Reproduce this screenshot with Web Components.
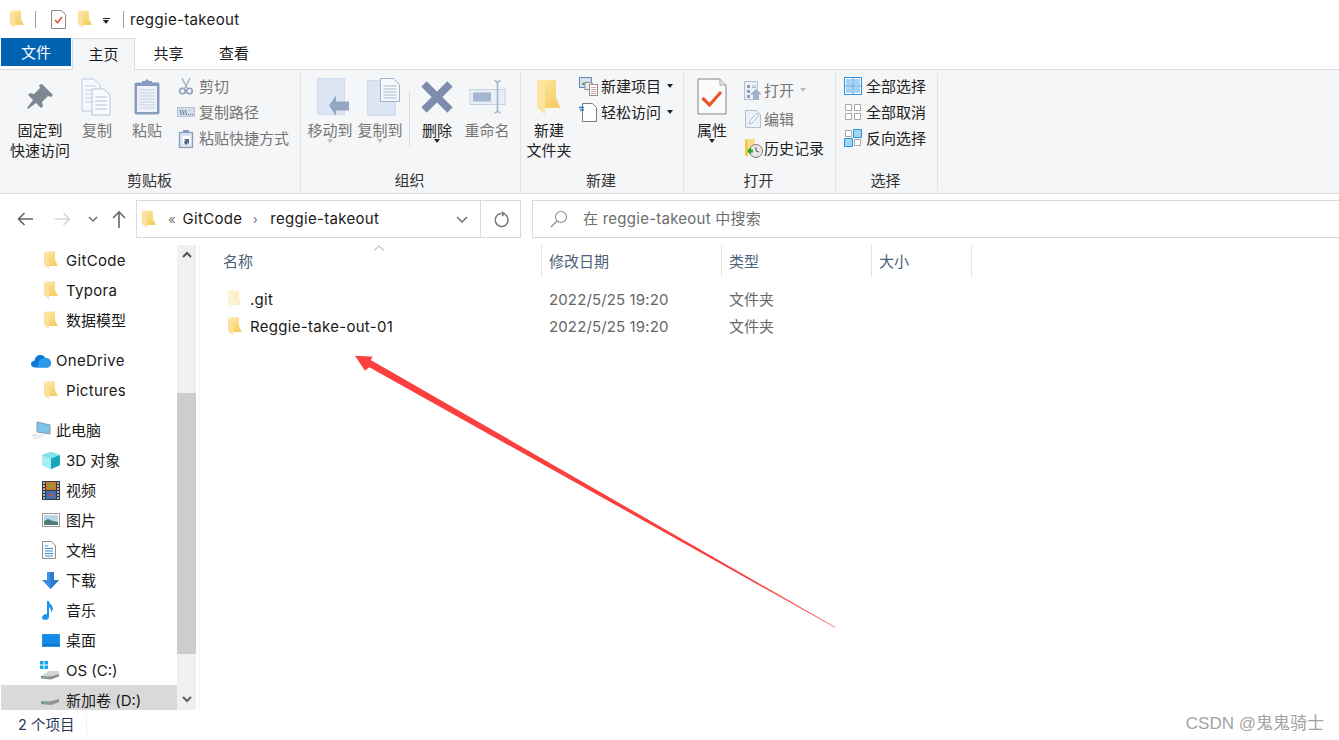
<!DOCTYPE html>
<html lang="zh-CN"><head><meta charset="utf-8"><title>reggie-takeout</title>
<style>
html,body{margin:0;padding:0;background:#fff;overflow:hidden}
body{width:1339px;height:740px;font:15px/20px Inter,"Noto Sans CJK SC",sans-serif;color:#1a1a1a}
</style></head><body>
<x-window>
  <x-titlebar title-text="reggie-takeout"></x-titlebar>
  <x-tabs></x-tabs>
  <x-ribbon>
    <x-group label="剪贴板" w="300" pad="7">
      <x-big icon="pin" w="64" text="固定到|快速访问"></x-big>
      <x-big icon="copy" w="50" text="复制" dim></x-big>
      <x-big icon="paste" w="50" text="粘贴" dim></x-big>
      <x-col gap="6" ml="5">
        <x-small icon="cut" text="剪切" dim></x-small>
        <x-small icon="cpath" text="复制路径" dim></x-small>
        <x-small icon="short" text="粘贴快捷方式" dim></x-small>
      </x-col>
    </x-group>
    <x-group label="组织" w="220" pad="4">
      <x-big icon="moveto" w="50" text="移动到" dim arrow></x-big>
      <x-big icon="copyto" w="50" text="复制到" dim arrow></x-big>
      <x-vsep></x-vsep>
      <x-big icon="del" w="46" text="删除" arrow strong></x-big>
      <x-big icon="rename" w="54" text="重命名" dim></x-big>
    </x-group>
    <x-group label="新建" w="163" pad="4">
      <x-big icon="bigfolder" w="48" text="新建|文件夹"></x-big>
      <x-col gap="6" ml="6">
        <x-small icon="newitem" text="新建项目" caret></x-small>
        <x-small icon="easy" text="轻松访问" caret></x-small>
      </x-col>
    </x-group>
    <x-group label="打开" w="152" pad="4">
      <x-big icon="prop" w="48" text="属性" arrow strong></x-big>
      <x-col gap="9" ml="8" mt="4">
        <x-small icon="open" text="打开" dim caret="dim" tg="2"></x-small>
        <x-small icon="edit" text="编辑" dim tg="2"></x-small>
        <x-small icon="hist" text="历史记录" tg="2"></x-small>
      </x-col>
    </x-group>
    <x-group label="选择" w="102" pad="8">
      <x-col gap="6">
        <x-small icon="selall" text="全部选择"></x-small>
        <x-small icon="selnone" text="全部取消"></x-small>
        <x-small icon="selinv" text="反向选择"></x-small>
      </x-col>
    </x-group>
  </x-ribbon>
  <x-addressbar></x-addressbar>
  <x-main>
    <x-nav slot="nav">
      <x-navitem icon="folder" ind="44" text="GitCode"></x-navitem>
      <x-navitem icon="folder" ind="44" text="Typora"></x-navitem>
      <x-navitem icon="folder" ind="44" text="数据模型"></x-navitem>
      <x-navitem icon="cloud" ind="31" text="OneDrive" gapt="10"></x-navitem>
      <x-navitem icon="folder" ind="44" text="Pictures"></x-navitem>
      <x-navitem icon="pc" ind="31" text="此电脑" gapt="10"></x-navitem>
      <x-navitem icon="cube" ind="42" text="3D 对象"></x-navitem>
      <x-navitem icon="film" ind="42" text="视频"></x-navitem>
      <x-navitem icon="image" ind="42" text="图片"></x-navitem>
      <x-navitem icon="doc" ind="42" text="文档"></x-navitem>
      <x-navitem icon="down" ind="42" text="下载"></x-navitem>
      <x-navitem icon="note" ind="42" text="音乐"></x-navitem>
      <x-navitem icon="desk" ind="42" text="桌面"></x-navitem>
      <x-navitem icon="osdrive" ind="40" text="OS (C:)"></x-navitem>
      <x-navitem icon="drive" ind="40" text="新加卷 (D:)" selected></x-navitem>
    </x-nav>
    <x-files slot="files">
      <x-filerow name=".git" date="2022/5/25 19:20" kind="文件夹" pale></x-filerow>
      <x-filerow name="Reggie-take-out-01" date="2022/5/25 19:20" kind="文件夹"></x-filerow>
    </x-files>
  </x-main>
  <x-status text="2 个项目"></x-status>
  <x-arrow></x-arrow>
  <x-mark text="CSDN @鬼鬼骑士"></x-mark>
</x-window>
<script>
const fold=(id)=>`<defs><linearGradient id="${id}" x1="0" y1="0" x2="0.6" y2="1"><stop offset="0" stop-color="#fde8a6"/><stop offset="1" stop-color="#f6cf66"/></linearGradient></defs>`;
const ICONS={
 folder:[14,18,fold('f1')+`<path d="M0 .5h11V9l3 6H5V3.500z" fill="url(#f1)"/><path d="M0 1l5 2.500V18l-5-4z" fill="#fbe19a"/>`],
 palefolder:[14,18,`<path d="M0 .5h11V9l3 6H5V3.500z" fill="#fdf0c8"/><path d="M0 1l5 2.500V18l-5-4z" fill="#fdf3d6"/>`],
 bigfolder:[24,35,fold('f3')+`<path d="M0 0h19v18l4.500 10H8V5z" fill="url(#f3)"/><path d="M0 .5l8 4.500v30l-8-7.500z" fill="#fce5a2"/>`],
 tdoc:[15,19,`<path d="M.5.500h10l4 4v14H.5z" fill="#fdfdfd" stroke="#8a8a8a"/><path d="M4 10l2.500 2.500L11 7" fill="none" stroke="#e8562a" stroke-width="1.600"/>`],
 pin:[28,28,`<path d="M16 1l11 11-2 2-3-1-6 6 1 4-2 2-5-5-8 6-1-1 6-8-5-5 2-2 4 1 6-6-1-3z" fill="#7e8893"/>`],
 copy:[32,38,`<path d="M1 1h12l6 6v26H1z" fill="#f5f8fc" stroke="#bcc9dc"/><path d="M4 8h11M4 12h11M4 16h11M4 20h11M4 24h11" stroke="#c3cfe0"/><path d="M11 11h12l6 6v20H11z" fill="#f8fafd" stroke="#b3c2d8"/><path d="M14 19h12M14 23h12M14 27h12M14 31h12" stroke="#b8c6da"/>`],
 paste:[28,38,`<rect x="1.500" y="4.500" width="25" height="32" rx="2" fill="#8a9cbd"/><rect x="4" y="8" width="20" height="26" fill="#eef2f8"/><path d="M6 12h16M6 15h16M6 18h16M6 21h16M6 24h16M6 27h16M6 30h16" stroke="#c6d1e3"/><path d="M9 6V3h3l2-2 2 2h3v3z" fill="#8a9cbd"/>`],
 cut:[14,18,`<path d="M3 1l5 10M11 1L6 11" stroke="#a6b4c8" stroke-width="1.500" fill="none"/><circle cx="3.500" cy="14" r="2.800" fill="none" stroke="#8ea0bc" stroke-width="1.600"/><circle cx="10.500" cy="14" r="2.800" fill="none" stroke="#8ea0bc" stroke-width="1.600"/>`],
 cpath:[18,12,`<rect x=".5" y="1.500" width="17" height="9" fill="#d3dcea" stroke="#b8c4d6"/><path d="M3 4l1.500 5M5.500 4L7 9M8 4l1.500 5" stroke="#56678a" stroke-width=".9"/><path d="M11 8.500h1M13 8.500h1M15 8.500h1" stroke="#56678a"/>`],
 short:[14,19,`<rect x=".5" y="3.500" width="13" height="15" fill="#dbe4f0" stroke="#8a9cbd" stroke-width="1.300"/><rect x="4" y="1" width="6" height="3" fill="#8a9cbd"/><rect x="3.500" y="7" width="8" height="8" fill="#fff"/><path d="M5 14l1-3-1-1h5v5l-1-1-2 2z" fill="#54698f"/>`],
 moveto:[38,38,`<g transform="translate(6 0)"><path d="M.5.5h27v36H.5z" fill="#dbe5f3" stroke="#cfdaea"/><path d="M12 27.500l7-10v6h13v9H19V38z" fill="#93a6c3"/></g>`],
 copyto:[40,38,`<g transform="translate(7 0)"><path d="M.5 2.500h28v35H.5z" fill="#dbe5f3" stroke="#cfdaea"/><path d="M13.500.5h13l6 6v17h-19z" fill="#f6f8fc" stroke="#9fb0c9"/><path d="M16.500 8h13M16.500 11h13M16.500 14h13M16.500 17h13M16.500 20h13" stroke="#a8b7cd"/></g>`],
 del:[32,32,`<path d="M3 3l26 26M29 3L3 29" stroke="#7d8dab" stroke-width="7.500" fill="none"/>`],
 rename:[38,34,`<rect x="2" y="9.500" width="35" height="15" fill="#e8eef7" stroke="#c4d1e3"/><rect x="5" y="12.500" width="18" height="9" fill="#a6b5cf"/><path d="M26.500 .8c3 0 3 2 3 4v24c0 2 0 4-3 4M32.500 .8c-3 0-3 2-3 4v24c0 2 0 4 3 4" fill="none" stroke="#a6b5cf" stroke-width="1.600"/>`],
 newitem:[19,19,`<rect x=".5" y=".5" width="12" height="10" fill="#d8e2ef" stroke="#5f88b5"/><path d="M2.500 8l2-3 1.500 2 2-3 2 4z" fill="#6e9a5e"/><rect x="6" y="5.500" width="7" height="7" fill="#e9eef5" stroke="#8d8d8d"/><rect x="10.500" y="7.500" width="8" height="11" fill="#fff" stroke="#8d8d8d"/><path d="M12 10.500h5M12 12.500h5M12 14.500h5M12 16.500h5" stroke="#e59a9a"/>`],
 easy:[18,19,`<path d="M3.500.5h10l4 4v14h-14z" fill="#fff" stroke="#7b7b7b"/><path d="M0 4.500h5M1 7h4" stroke="#2f7fc4" stroke-width="1.300"/>`],
 prop:[30,38,`<path d="M1 1h22l6 6v29H1z" fill="#fbfbfb" stroke="#858585"/><path d="M23 1v6h6" fill="#e6e6e6" stroke="#a5a5a5"/><path d="M5.500 20l7 7L24 14" fill="none" stroke="#e8562a" stroke-width="3.200"/>`],
 open:[18,19,`<rect x=".5" y=".5" width="13" height="18" fill="#eef2f8" stroke="#b4c0d2"/><path d="M3 4h3v3H3zM3 9h3v3H3zM3 14h3v3H3z" fill="#8c9cb5"/><path d="M8 5h4M8 6.500h4" stroke="#a8b5c9"/><path d="M12 8l6 5.500h-3V19H9v-5.500H6z" fill="#9fb0c8"/>`],
 edit:[16,18,`<path d="M.5.5h11l4 4v13H.5z" fill="#edf1f7" stroke="#b4c0d2"/><path d="M4 14l1-3 7-8 2 2-7 8z" fill="#fff" stroke="#a9b8cd"/>`],
 hist:[19,19,`<path d="M1 0h10v14H1z" fill="#f9dd8c"/><path d="M1 0l3 2v16l-3-2z" fill="#f3c64e"/><circle cx="12" cy="12" r="6.500" fill="#e9e9e9" stroke="#777"/><path d="M12 8v4l3 1" fill="none" stroke="#555"/><path d="M3 12l4-4v2.500h2v3H7V16z" fill="#2fa32f"/>`],
 selall:[18,18,`<rect x=".5" y=".5" width="17" height="17" fill="#fff" stroke="#2f93dc"/><path d="M2 2h6v6H2zM10 2h6v6h-6zM2 10h6v6H2zM10 10h6v6h-6z" fill="#a5d3f5"/><path d="M9 0v18M0 9h18" stroke="#2f93dc"/>`],
 selnone:[18,18,`<path d="M1.500 1.500h6v6h-6zM10.500 1.500h6v6h-6zM1.500 10.500h6v6h-6zM10.500 10.500h6v6h-6z" fill="#fff" stroke="#a9a9a9"/>`],
 selinv:[18,18,`<path d="M1.500 1.500h6v6h-6zM10.500 10.500h6v6h-6z" fill="#fff" stroke="#a9a9a9"/><path d="M9.500.5h8v8h-8zM.5 9.500h8v8h-8z" fill="#a5d3f5" stroke="#2f93dc"/>`],
 cloud:[20,15,`<path d="M4 14.500C1.500 14.500 0 13 0 11c0-2 1.500-3.300 3.500-3.300C4 4 6.500 2 9.300 2c2.300 0 4.100 1.200 5 3 3-.2 5.700 2 5.700 5.200 0 2.500-1.800 4.300-4 4.300z" fill="#0f78d4"/><path d="M9 7c1.500-1.500 3.500-2 5.300-2 3 0 5.700 2 5.700 5.200 0 2.500-1.800 4.300-4 4.300H5c3-1 2-6 4-7.500z" fill="#2c9aea"/>`],
 pc:[20,18,`<path d="M6 1l13 3v9L6 11z" fill="#7cc3ee" stroke="#8e99a8"/><path d="M0 16l9-3 6 1-8 4H3z" fill="#eceff2"/><path d="M1 14l4-1 1 1-4 1z" fill="#c9cdd2"/>`],
 cube:[18,17,`<path d="M9 0l9 3v10l-9 4-9-4V3z" fill="#4ecfe0"/><path d="M0 3l9 3.500V17l-9-4z" fill="#a7ecf4"/><path d="M9 6.500L18 3v10l-9 4z" fill="#17a6bb"/><path d="M9 0l9 3-9 3.500L0 3z" fill="#7fe2ee"/>`],
 film:[18,19,`<rect width="18" height="19" fill="#3a3a3a"/><rect x="4" y="1" width="10" height="8" fill="#c97a2b"/><rect x="4" y="10" width="10" height="8" fill="#3d6fbf"/><path d="M1 2h2M1 5h2M1 8h2M1 11h2M1 14h2M1 17h2M15 2h2M15 5h2M15 8h2M15 11h2M15 14h2M15 17h2" stroke="#d8d8d8" stroke-width="1.400"/><circle cx="9" cy="5" r="2" fill="#7cab4c"/><circle cx="9" cy="14" r="2" fill="#c2553a"/>`],
 image:[18,14,`<rect x=".5" y=".5" width="17" height="13" fill="#fff" stroke="#9a9a9a"/><rect x="2" y="2" width="14" height="10" fill="#b9d6ec"/><path d="M2 8l4-2 5 2 5 1v3H2z" fill="#4d7f78"/>`],
 doc:[14,18,`<path d="M.5.5h9l4 4v13H.5z" fill="#fafafa" stroke="#8f8f8f"/><path d="M3 5h3M3 7.500h8M3 10h8M3 12.500h8M3 15h8" stroke="#3f94d8"/>`],
 down:[17,17,`<path d="M5 0h7v8h5l-8.500 9L0 8h5z" fill="#3a8ee0"/><path d="M8.500 0H12v8h5l-8.500 9z" fill="#2c7acb"/>`],
 note:[12,19,`<path d="M5 0h2c0 3 4 4 4 8 0 1-1 2-2 3 0-3-1-4-2-5v10c0 2-2 3-4 3s-3-1-3-2.500S2 13 5 13z" fill="#1e95ee"/>`],
 desk:[18,13,`<rect width="18" height="13" rx=".5" fill="#1e95ee"/><rect x="1" y="1" width="16" height="10" fill="#1489e6"/><path d="M1 11h16" stroke="#0b5fa8"/>`],
 osdrive:[20,19,`<path d="M0 0h3.500v3.500H0zM4.500 0H8v3.500H4.500zM0 4.500h3.500V8H0zM4.500 4.500H8V8H4.500z" fill="#12a7e8"/><path d="M1 15l8-5h10v3l-8 5-10-1z" fill="#d6d6d6"/><path d="M1 15l9 .5 9-2.500v2.500l-8 3-10-1z" fill="#8d9296"/><rect x="4" y="15.500" width="3" height="1.300" fill="#6cc04a"/>`],
 drive:[20,11,`<path d="M1 6l8-5h10v3l-8 5-10-1z" fill="#d9d9d9"/><path d="M1 6l9 .5 9-2.500v3l-8 3-10-1z" fill="#8d9296"/><rect x="4" y="6.800" width="3" height="1.300" fill="#6cc04a"/>`],
 back:[16,14,`<path d="M16 7H1.500M7.500 1L1.500 7l6 6" fill="none" stroke="#5f6368" stroke-width="1.600"/>`],
 fwd:[16,14,`<path d="M0 7h14.500M8.500 1l6 6-6 6" fill="none" stroke="#d4d4d4" stroke-width="1.600"/>`],
 up:[14,18,`<path d="M7 18V2M1 8l6-6 6 6" fill="none" stroke="#6b6f75" stroke-width="1.700"/>`],
 chev:[10,6,`<path d="M1 1l4 4 4-4" fill="none" stroke="#6d6d6d" stroke-width="1.500"/>`],
 chevd:[12,7,`<path d="M1 1l5 5 5-5" fill="none" stroke="#6d6d6d" stroke-width="1.500"/>`],
 refresh:[16,17,`<path d="M12.500 3.700A6.500 6.500 0 1 1 8 2.500" fill="none" stroke="#777" stroke-width="1.500"/><path d="M8.500 0l4.500 3-4 2.500z" fill="#777"/>`],
 search:[18,18,`<circle cx="11" cy="7" r="5.500" fill="none" stroke="#8c8c8c" stroke-width="1.100"/><path d="M7 11l-6 6" stroke="#a8845c" stroke-width="1.300"/>`],
 sortup:[12,6,`<path d="M1 5.500l5-4.500 5 4.500" fill="none" stroke="#a6a6a6"/>`],
 sbup:[10,6,`<path d="M1 5l4-4 4 4" fill="none" stroke="#505050" stroke-width="2"/>`],
 sbdown:[10,6,`<path d="M1 1l4 4 4-4" fill="none" stroke="#606060" stroke-width="2"/>`]
};
function def(name,css,render){
  customElements.define(name,class extends HTMLElement{
    connectedCallback(){
      if(this.shadowRoot)return;
      const s=this.attachShadow({mode:'open'});
      s.innerHTML=`<style>${css}</style>`+render(this);
    }
  });
}
def('x-ico',':host{display:block;line-height:0;flex:none}svg{display:block;overflow:visible}',h=>{
  const [w,hh,p]=ICONS[h.getAttribute('name')];
  return `<svg width="${w}" height="${hh}" viewBox="0 0 ${w} ${hh}" aria-hidden="true">${p}</svg>`;
});
def('x-window',':host{display:block;position:relative;width:1339px;height:740px;overflow:hidden;background:#fff}',()=>'<slot></slot>');
def('x-titlebar',`:host{display:flex;align-items:center;height:38px;padding-left:10px;box-sizing:border-box;font-size:15px}
 .s{width:1px;height:17px;background:#a0a0a0}.c{width:0;height:0;border:3.500px solid transparent;border-top:4px solid #222;border-bottom:0;position:relative}
 .u{width:7px;height:1px;background:#222;margin-bottom:1px}.d{display:flex;flex-direction:column;margin:4px 0 0 11px;width:7px}`,h=>
 `<x-ico name="folder"></x-ico><div class="s" style="margin-left:11px"></div><div style="width:15px"></div><x-ico name="tdoc"></x-ico><div style="width:12px"></div><x-ico name="folder"></x-ico>
  <div class="d"><div class="u"></div><div class="c"></div></div><div class="s" style="margin-left:13px"></div><span style="margin-left:6px;padding-top:2px;letter-spacing:.35px">${h.getAttribute('title-text')}</span>`);
def('x-tabs',`:host{display:flex;height:32px;padding-left:1px;box-sizing:border-box;position:relative;z-index:1}
 div{font-size:15px;line-height:32px;text-align:center;box-sizing:border-box;height:32px}
 .f{width:70px;height:28px;line-height:30px;background:#0063b1;color:#fff;margin-right:1px}
 .h{width:63px;background:#f5f6f7;border:1px solid #dadbdc;border-bottom:0}
 .t{width:66px}.t.a{width:65px;margin-left:1px}`,()=>
 `<div class="f">文件</div><div class="h">主页</div><div class="t a">共享</div><div class="t">查看</div>`);
def('x-ribbon',`:host{display:flex;height:125px;margin-top:-1px;box-sizing:border-box;background:#f5f6f7;border-top:1px solid #dadbdc;border-bottom:1px solid #dadbdc;padding-left:1px}`,()=>'<slot></slot>');
def('x-group',`:host{display:flex;flex-direction:column;box-sizing:border-box;flex:none;height:123px;position:relative}
 :host::after{content:"";position:absolute;right:0;top:3px;bottom:2px;width:1px;background:#e1e2e3}
 .b{display:flex;flex:1;align-items:flex-start;padding-top:6px;min-height:0}
 .l{height:24px;line-height:24px;text-align:center;font-size:15px;color:#333;padding-right:3px}`,h=>{
  h.style.width=h.getAttribute('w')+'px';
  return `<div class="b" style="padding-left:${h.getAttribute('pad')}px"><slot></slot></div><div class="l">${h.getAttribute('label')}</div>`;
 });
def('x-big',`:host{display:flex;flex-direction:column;align-items:center;flex:none;box-sizing:border-box}
 .i{height:42px;display:flex;align-items:center;justify-content:center;margin-bottom:3px}
 .t{text-align:center;line-height:20px;white-space:nowrap}
 .a{width:0;height:0;border:3.500px solid transparent;border-top:4px solid #222;border-bottom:0;margin-top:-2px}
 .a.dim{border-top-color:#bdbdbd}`,h=>{
  const dim=h.hasAttribute('dim');
  h.style.width=h.getAttribute('w')+'px';
  return `<div class="i"><x-ico name="${h.getAttribute('icon')}"></x-ico></div><div class="t" style="color:${dim?'#757575':'#222'}">${h.getAttribute('text').split('|').join('<br>')}</div>${h.hasAttribute('arrow')?`<div class="a ${dim?'dim':''}"></div>`:''}`;
 });
def('x-col',`:host{display:flex;flex-direction:column;flex:none}`,h=>{
  h.style.rowGap=(h.getAttribute('gap')||0)+'px';
  h.style.marginLeft=(h.getAttribute('ml')||0)+'px';
  h.style.marginTop=(h.getAttribute('mt')||0)+'px';
  return '<slot></slot>';
});
def('x-small',`:host{display:flex;align-items:center;height:20px;white-space:nowrap}
 .i{width:18px;display:flex;justify-content:center}
 span{padding-top:2px}
 .c{width:0;height:0;border:3.500px solid transparent;border-top:4px solid #222;border-bottom:0;margin-left:6px}
 .c.d{border-top-color:#bdbdbd}`,h=>{
  const dim=h.hasAttribute('dim'),c=h.getAttribute('caret');
  return `<div class="i" style="margin-right:${h.getAttribute('tg')||4}px"><x-ico name="${h.getAttribute('icon')}"></x-ico></div><span style="color:${dim?'#757575':'#222'}">${h.getAttribute('text')}</span>${c!==null?`<div class="c ${c==='dim'?'d':''}"></div>`:''}`;
 });
def('x-vsep',`:host{display:block;flex:none;width:1px;height:55px;background:#dcdddf;margin:15px 4px 0 4px}`,()=>'');
def('x-addressbar',`:host{display:flex;align-items:center;height:51px;box-sizing:border-box;padding:6px 0 7px 17px}
 .box{display:flex;align-items:center;height:38px;box-sizing:border-box;border:1px solid #d9d9d9;background:#fff}
 .a{width:385px;margin-left:10px;padding-left:5px;flex:none}.s{flex:1;margin-left:12px;padding-left:17px;border-right:0;color:#6d6d6d;letter-spacing:.25px}
 .r{margin-left:auto;display:flex;align-items:center;height:100%}
 .v{width:1px;height:100%;background:#d9d9d9}.ls{letter-spacing:.3px}`,()=>
 `<x-ico name="back"></x-ico><div style="width:22px"></div><x-ico name="fwd"></x-ico><div style="width:17px"></div><x-ico name="chev"></x-ico><div style="width:14px"></div><x-ico name="up"></x-ico>
 <div class="box a"><x-ico name="folder"></x-ico><span style="margin-left:12px;color:#777;font-size:13px">«</span><span class="ls" style="margin-left:7px">GitCode</span>
 <span style="margin:0 12px 0 10px;color:#777;font-size:13px;width:6px;text-align:center">›</span><span class="ls">reggie-takeout</span>
 <div class="r"><x-ico name="chevd"></x-ico><div style="width:12px"></div><div class="v"></div><div style="width:12px"></div><x-ico name="refresh"></x-ico><div style="width:11px"></div></div></div>
 <div class="box s" style="margin-left:11px"><x-ico name="search"></x-ico><span style="margin-left:15px">在 reggie-takeout 中搜索</span></div>`);
def('x-main',`:host{display:flex;height:465px;position:relative}
 ::slotted([slot=nav]){flex:none}::slotted([slot=files]){flex:1}`,()=>'<slot name="nav"></slot><slot name="files"></slot>');
def('x-nav',`:host{display:flex;width:200px;height:465px;box-sizing:border-box;border-right:1px solid #f2f2f2;padding-left:1px}
 .l{width:176px;overflow:hidden;height:465px}
 .sb{width:19px;height:465px;background:#f0f0f0;display:flex;flex-direction:column;align-items:center}
 .ar{display:flex;align-items:center;justify-content:center;flex:none}
 .tr{flex:1}.th{height:261px;background:#cdcdcd;width:19px;margin-top:128px}`,()=>
 `<div class="l"><slot></slot></div><div class="sb"><div class="ar" style="height:20px"><x-ico name="sbup"></x-ico></div><div class="tr"><div class="th"></div></div><div class="ar" style="height:22px"><x-ico name="sbdown"></x-ico></div></div>`);
def('x-navitem',`:host{display:flex;align-items:center;height:30px;white-space:nowrap;box-sizing:border-box}
 .w{display:flex;justify-content:center;flex:none}span{padding-top:2px}`,h=>{
  h.style.paddingLeft=(+h.getAttribute('ind')-1)+'px';
  if(h.hasAttribute('gapt'))h.style.marginTop=h.getAttribute('gapt')+'px';
  if(h.hasAttribute('selected'))h.style.background='#d9d9d9';
  const icon=h.getAttribute('icon'),text=h.getAttribute('text');
  const wide=(+h.getAttribute('ind'))<=31;
  const tx=wide?56:66; const w=ICONS[icon][0];
  const ls=/^[A-Za-z]+$/.test(text)?'letter-spacing:.3px;':'';
  return `<div class="w"><x-ico name="${icon}"></x-ico></div><span style="${ls}margin-left:${tx-(+h.getAttribute('ind'))-w}px">${text}</span>`;
 });
def('x-files',`:host{display:block;box-sizing:border-box}
 .hd{display:flex;height:32px;position:relative;color:#4c607a}
 .c{box-sizing:border-box;padding-left:7px;line-height:34px;border-right:1px solid #e5e5e5;height:32px}
 .n{width:342px;padding-left:23px;position:relative}
 .sort{position:absolute;left:173px;top:0}
 .rows{padding-top:8px}`,()=>
 `<div class="hd"><div class="c n">名称<div class="sort"><x-ico name="sortup"></x-ico></div></div><div class="c" style="width:180px">修改日期</div><div class="c" style="width:150px">类型</div><div class="c" style="width:100px">大小</div></div><div class="rows"><slot></slot></div>`);
def('x-filerow',`:host{display:flex;align-items:center;height:27px;white-space:nowrap}
 .n{width:342px;box-sizing:border-box;padding-left:28px;display:flex;align-items:center;flex:none}
 span{padding-top:2px}.g{color:#666}`,h=>
 `<div class="n"><x-ico name="${h.hasAttribute('pale')?'palefolder':'folder'}"></x-ico><span style="margin-left:8px;letter-spacing:.3px">${h.getAttribute('name')}</span></div>
 <span class="g" style="width:180px;padding-left:7px;box-sizing:border-box;letter-spacing:.13px">${h.getAttribute('date')}</span><span class="g" style="padding-left:7px">${h.getAttribute('kind')}</span>`);
def('x-status',`:host{display:flex;align-items:center;height:30px;padding:0 0 0 18px;color:#2a3a55;font-size:14.500px}
 i{width:1px;height:20px;background:#f0f0f0;margin-left:12px}`,h=>`<span>${h.getAttribute('text')}</span><i></i>`);
def('x-arrow',`:host{display:block;position:absolute;left:0;top:0;width:1339px;height:740px;pointer-events:none}svg{display:block}`,()=>
 `<svg width="1339" height="740" viewBox="0 0 1339 740"><polygon points="355,355.700 372.700,356.700 370.700,360 835,627 834.800,627.500 369.300,367.300 365,370.700" fill="#fb3f3f"/></svg>`);
def('x-mark',`:host{position:absolute;right:15px;top:712px;color:#a3a3a3;font:17px/24px "Liberation Sans","Noto Sans CJK SC",sans-serif;white-space:nowrap}`,h=>h.getAttribute('text'));
</script>
</body></html>
